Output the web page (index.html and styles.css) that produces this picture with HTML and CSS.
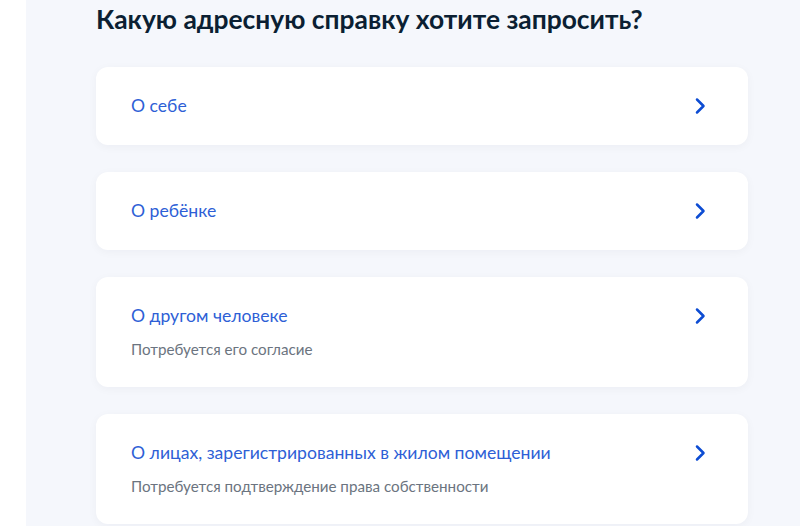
FILE: index.html
```html
<!DOCTYPE html>
<html lang="ru">
<head>
    <meta charset="UTF-8">
    <meta name="viewport" content="width=device-width, initial-scale=1.0">
    <title>Адресная справка</title>
    <link rel="stylesheet" href="styles.css">
</head>
<body>
    <div class="page">
        <div class="content">
            <h1>Какую адресную справку хотите запросить?</h1>

            <div class="options">
                <a class="option" href="#">
                    <div class="option-text">
                        <div class="option-title">О себе</div>
                    </div>
                    <svg class="chevron" width="20" height="20" viewBox="0 0 20 20">
                        <path d="M7 3.5 L13.5 10 L7 16.5" fill="none" stroke="#0d4cd3" stroke-width="2.5" stroke-linecap="round" stroke-linejoin="round"/>
                    </svg>
                </a>

                <a class="option" href="#">
                    <div class="option-text">
                        <div class="option-title">О ребёнке</div>
                    </div>
                    <svg class="chevron" width="20" height="20" viewBox="0 0 20 20">
                        <path d="M7 3.5 L13.5 10 L7 16.5" fill="none" stroke="#0d4cd3" stroke-width="2.5" stroke-linecap="round" stroke-linejoin="round"/>
                    </svg>
                </a>

                <a class="option" href="#">
                    <div class="option-text">
                        <div class="option-title">О другом человеке</div>
                        <div class="option-note">Потребуется его согласие</div>
                    </div>
                    <svg class="chevron" width="20" height="20" viewBox="0 0 20 20">
                        <path d="M7 3.5 L13.5 10 L7 16.5" fill="none" stroke="#0d4cd3" stroke-width="2.5" stroke-linecap="round" stroke-linejoin="round"/>
                    </svg>
                </a>

                <a class="option" href="#">
                    <div class="option-text">
                        <div class="option-title">О лицах, зарегистрированных в жилом помещении</div>
                        <div class="option-note">Потребуется подтверждение права собственности</div>
                    </div>
                    <svg class="chevron" width="20" height="20" viewBox="0 0 20 20">
                        <path d="M7 3.5 L13.5 10 L7 16.5" fill="none" stroke="#0d4cd3" stroke-width="2.5" stroke-linecap="round" stroke-linejoin="round"/>
                    </svg>
                </a>
            </div>
        </div>
    </div>
</body>
</html>
```

FILE: styles.css
```css
body {
    margin: 0;
    background: #ffffff;
    font-family: Lato, 'Liberation Sans', Arial, sans-serif;
}

.page {
    margin-left: 26px;
    min-height: 100vh;
    background: #f5f7fc;
    overflow: hidden;
}

.content {
    width: 652px;
    margin-left: 70px;
    padding-top: 3px;
}

h1 {
    margin: 0 0 31px 0;
    font-size: 26.4px;
    line-height: 33px;
    font-weight: 700;
    color: #0b1f33;
}

.options {
    display: flex;
    flex-direction: column;
    gap: 27px;
}

.option {
    display: flex;
    align-items: flex-start;
    justify-content: space-between;
    background: #ffffff;
    border-radius: 12px;
    padding: 28px 38px 28px 35px;
    box-shadow: 0 2px 10px rgba(11, 31, 51, 0.04);
    text-decoration: none;
}

.option-title {
    font-size: 17.6px;
    line-height: 22px;
    color: #2e5fd6;
}

.option-note {
    margin-top: 12px;
    font-size: 15.2px;
    line-height: 20px;
    color: #6b7480;
}

.chevron {
    flex: none;
    margin-top: 1px;
}
```
